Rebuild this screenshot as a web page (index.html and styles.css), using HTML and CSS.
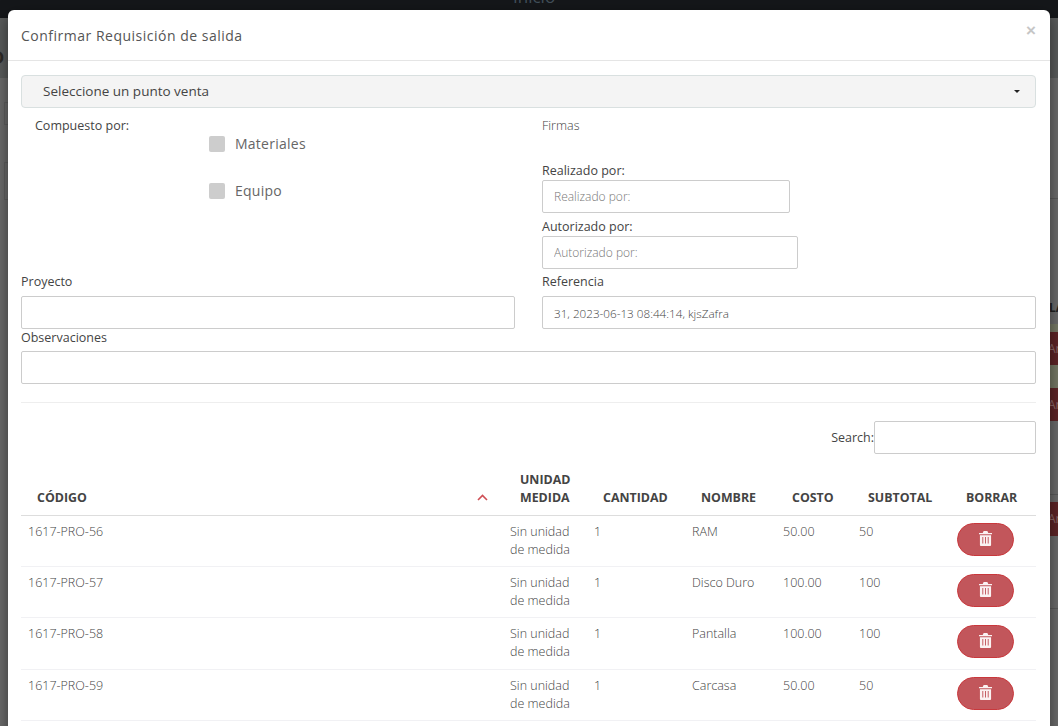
FILE: index.html
```html
<!DOCTYPE html>
<html lang="es">
<head>
<meta charset="utf-8">
<title>Confirmar Requisición de salida</title>
<link rel="stylesheet" href="styles.css">
</head>
<body>
<div class="behind">
  <div class="topbar"><span class="topbar-title">Inicio</span></div>
  <div class="subbar"><span class="subbar-letter">D</span></div>
  <div class="strip-l">
    <div class="ghost ghost-a"></div>
    <div class="ghost ghost-b"></div>
  </div>
  <div class="strip-r">
    <div class="r-line r-line-a"></div>
    <div class="r-head">LA</div>
    <div class="r-olive r-olive-a"></div>
    <div class="r-red">An</div>
    <div class="r-olive r-olive-b"></div>
    <div class="r-red">An</div>
    <div class="r-line r-line-b"></div>
    <div class="r-red r-red-c">An</div>
    <div class="r-line r-line-c"></div>
  </div>
</div>

<div class="modal">
  <div class="modal-header">
    <h4 class="modal-title">Confirmar Requisición de salida</h4>
    <span class="close">×</span>
  </div>
  <div class="modal-body">
    <div class="select-box">
      <span>Seleccione un punto venta</span>
      <i class="caret"></i>
    </div>

    <div class="two-col top-form">
      <div class="composed">
        <div class="composed-label">Compuesto por:</div>
        <label class="check check-a"><i class="check-box"></i>Materiales</label>
        <label class="check check-b"><i class="check-box"></i>Equipo</label>
      </div>
      <div class="signatures">
        <div class="firmas">Firmas</div>
        <label class="lbl lbl-real" for="realizado">Realizado por:</label>
        <input id="realizado" class="field field-real" placeholder="Realizado por:">
        <label class="lbl lbl-aut" for="autorizado">Autorizado por:</label>
        <input id="autorizado" class="field field-aut" placeholder="Autorizado por:">
      </div>
    </div>

    <div class="two-col row-pr">
      <div>
        <label class="lbl lbl-row" for="proyecto">Proyecto</label>
        <input id="proyecto" class="field">
      </div>
      <div>
        <label class="lbl lbl-row" for="referencia">Referencia</label>
        <input id="referencia" class="field field-value" value="31, 2023-06-13 08:44:14, kjsZafra">
      </div>
    </div>

    <label class="lbl lbl-obs" for="observaciones">Observaciones</label>
    <input id="observaciones" class="field">

    <hr class="divider">

    <div class="search-row">
      <label class="search-label" for="search">Search:</label>
      <input id="search" class="field search-field">
    </div>

    <table class="grid">
      <colgroup>
        <col class="c1"><col class="c2"><col class="c3"><col class="c4"><col class="c5"><col class="c6"><col class="c7">
      </colgroup>
      <thead>
        <tr>
          <th class="th-code">CÓDIGO
            <svg class="sort" width="11" height="7" viewBox="0 0 11 7"><path d="M1 6l4.500-4.500L10 6" fill="none" stroke="#cf4f55" stroke-width="1.6"/></svg>
          </th>
          <th class="th-unit">UNIDAD MEDIDA</th>
          <th>CANTIDAD</th>
          <th>NOMBRE</th>
          <th>COSTO</th>
          <th>SUBTOTAL</th>
          <th>BORRAR</th>
        </tr>
      </thead>
      <tbody>
        <tr>
          <td>1617-PRO-56</td><td>Sin unidad de medida</td><td>1</td><td>RAM</td><td>50.00</td><td>50</td>
          <td><button class="del" type="button"><svg width="13" height="15" viewBox="0 0 14 16"><path fill="#fff" fill-opacity=".92" fill-rule="evenodd" d="M5 0h4l1 2h4v1.500H0V2h4zM1 4.500h12V15a1 1 0 0 1-1 1H2a1 1 0 0 1-1-1zM3.600 6.500v7h1v-7zM6.500 6.500v7h1v-7zM9.400 6.500v7h1v-7z"/></svg></button></td>
        </tr>
        <tr>
          <td>1617-PRO-57</td><td>Sin unidad de medida</td><td>1</td><td>Disco Duro</td><td>100.00</td><td>100</td>
          <td><button class="del" type="button"><svg width="13" height="15" viewBox="0 0 14 16"><path fill="#fff" fill-opacity=".92" fill-rule="evenodd" d="M5 0h4l1 2h4v1.500H0V2h4zM1 4.500h12V15a1 1 0 0 1-1 1H2a1 1 0 0 1-1-1zM3.600 6.500v7h1v-7zM6.500 6.500v7h1v-7zM9.400 6.500v7h1v-7z"/></svg></button></td>
        </tr>
        <tr>
          <td>1617-PRO-58</td><td>Sin unidad de medida</td><td>1</td><td>Pantalla</td><td>100.00</td><td>100</td>
          <td><button class="del" type="button"><svg width="13" height="15" viewBox="0 0 14 16"><path fill="#fff" fill-opacity=".92" fill-rule="evenodd" d="M5 0h4l1 2h4v1.500H0V2h4zM1 4.500h12V15a1 1 0 0 1-1 1H2a1 1 0 0 1-1-1zM3.600 6.500v7h1v-7zM6.500 6.500v7h1v-7zM9.400 6.500v7h1v-7z"/></svg></button></td>
        </tr>
        <tr>
          <td>1617-PRO-59</td><td>Sin unidad de medida</td><td>1</td><td>Carcasa</td><td>50.00</td><td>50</td>
          <td><button class="del" type="button"><svg width="13" height="15" viewBox="0 0 14 16"><path fill="#fff" fill-opacity=".92" fill-rule="evenodd" d="M5 0h4l1 2h4v1.500H0V2h4zM1 4.500h12V15a1 1 0 0 1-1 1H2a1 1 0 0 1-1-1zM3.600 6.500v7h1v-7zM6.500 6.500v7h1v-7zM9.400 6.500v7h1v-7z"/></svg></button></td>
        </tr>
      </tbody>
    </table>
  </div>
</div>
</body>
</html>
```

FILE: styles.css
```css
* { box-sizing: border-box; }
html, body { margin: 0; height: 100%; overflow: hidden; }
body {
  background: #6c6c6c;
  font-family: "Open Sans", "Liberation Sans", sans-serif;
  font-size: 12.5px;
  color: #444;
  position: relative;
}

/* dimmed page behind the dialog */
.behind { height: 726px; display: grid; grid-template-columns: 8px 1fr 8px; grid-template-rows: 18px 60px 1fr; }
.topbar { grid-column: 1 / 4; background: #15171a; overflow: hidden; height: 18px; }
.topbar-title { display: block; margin: -15px 0 0 513px; font-size: 17px; line-height: 24px; color: #42505a; }
.subbar { grid-column: 1 / 4; background: #5a5c5c; overflow: hidden; padding-top: 28px; }
.subbar-letter { display: block; margin-left: -9px; font-size: 18px; line-height: 22px; font-weight: 700; color: #2e2a26; }
.strip-l { grid-column: 1; }
.ghost { margin-left: 4px; border: 1px solid #606060; border-right: 0; }
.ghost-a { height: 23px; margin-top: 24px; }
.ghost-b { height: 38px; margin-top: 37px; }
.strip-r { grid-column: 3; overflow: hidden; display: flex; flex-direction: column; }
.r-line { height: 1px; background: #5b5b5b; flex: none; }
.r-line-a { margin-top: 120px; }
.r-head { margin-top: 100px; height: 25px; font-size: 12px; line-height: 18px; font-weight: 700; color: #222; margin-left: -1px; }
.r-olive { flex: none; background: #777a66; }
.r-olive-a { height: 8px; }
.r-olive-b { height: 23px; }
.r-red { flex: none; height: 33px; margin-left: -2px; background: #5f2527; color: #8d6a6a; font-size: 12px; line-height: 33px; overflow: hidden; white-space: nowrap; }
.r-line-b { margin-top: 73px; }
.r-red-c { margin-top: 7px; height: 34px; }
.r-line-c { margin-top: 72px; }

/* dialog */
.modal {
  position: absolute;
  left: 8px;
  top: 10px;
  width: 1042px;
  background: #fff;
  border-radius: 6px;
  box-shadow: 0 5px 15px rgba(0, 0, 0, .5);
}
.modal-header {
  height: 51px;
  padding: 0 13px;
  border-bottom: 1px solid #e5e5e5;
  display: flex;
  align-items: center;
  justify-content: space-between;
}
.modal-title { margin: 0 0 -1px; font-size: 14px; line-height: 20px; font-weight: 400; letter-spacing: .5px; color: #555; }
.close { font-size: 17px; line-height: 20px; margin-top: -8px; margin-right: 1px; color: #c6c6c6; font-family: "Liberation Sans", sans-serif; font-weight: 700; }

.modal-body { padding: 14px 14px 40px 13px; }

.select-box {
  height: 33px;
  background: #f4f4f4;
  border: 1px solid #d9e0e0;
  border-radius: 4px;
  padding: 0 14px 2px 21px;
  display: flex;
  align-items: center;
  justify-content: space-between;
  font-size: 13.500px;
  color: #444;
}
.caret { width: 0; height: 0; border-left: 3px solid transparent; border-right: 3px solid transparent; border-top: 3px solid #222; margin: 2px 1px 0 0; }

.two-col { display: grid; grid-template-columns: 494px 494px; column-gap: 27px; }
.top-form { height: 165px; }

.composed { padding-top: 9px; }
.composed-label { margin-left: 14px; line-height: 18px; color: #444; }
.check { display: flex; align-items: center; margin-left: 188px; font-size: 14px; letter-spacing: .25px; color: #666; line-height: 20px; }
.check-a { margin-top: -1px; }
.check-b { margin-top: 27px; }
.check-box { width: 16px; height: 16px; background: #cdcdcd; border-radius: 2px; margin-right: 10px; }

.signatures { padding-top: 9px; display: flex; flex-direction: column; align-items: flex-start; }
.firmas { line-height: 18px; font-weight: 300; color: #444; }
.lbl { display: block; line-height: 18px; color: #444; }
.lbl-real { margin-top: 27px; }
.lbl-aut { margin-top: 5px; }
.lbl-row { margin-bottom: 5px; }
.lbl-obs { margin-top: 0; margin-bottom: 4px; }

.field {
  display: block;
  width: 100%;
  height: 33px;
  background: #fff;
  border: 1px solid #ccc;
  border-radius: 2px;
  padding: 0 11px;
  font-family: inherit;
  font-size: 12px;
  font-weight: 300;
  color: #333;
  outline: 0;
}
.field::placeholder { color: #777; opacity: 1; }
.field-real { width: 248px; }
.field-aut { width: 256px; }
.field-value { color: #444; font-size: 11.700px; }

.divider { border: 0; border-top: 1px solid #eee; margin: 18px 0; }

.search-row { display: flex; justify-content: flex-end; align-items: center; height: 33px; }
.search-label { color: #444; }
.search-field { width: 162px; }

.grid { width: 1015px; margin-top: 7.700px; border-collapse: collapse; table-layout: fixed; }
.c1 { width: 482px; }
.c2 { width: 84px; }
.c3 { width: 98px; }
.c4 { width: 91px; }
.c5 { width: 76px; }
.c6 { width: 98px; }
.c7 { width: 86px; }
.grid th {
  position: relative;
  text-align: left;
  vertical-align: bottom;
  padding: 9px 0 8px 16px;
  font-size: 12.400px;
  line-height: 18px;
  font-weight: 700;
  color: #444;
  border-bottom: 1px solid #ddd;
}
.grid .th-unit { padding-left: 17px; }
.sort { position: absolute; right: 15px; bottom: 14px; }
.grid td {
  height: 51.330px;
  vertical-align: top;
  padding: 7px;
  font-size: 12.500px;
  line-height: 18px;
  font-weight: 300;
  color: #444;
  border-bottom: 1px solid #f1f1f4;
}
.del {
  display: flex;
  align-items: center;
  justify-content: center;
  width: 57px;
  height: 33px;
  padding: 0 0 2px;
  background: #c2565b;
  border: 1px solid #c9383c;
  border-radius: 17px;
}
```
